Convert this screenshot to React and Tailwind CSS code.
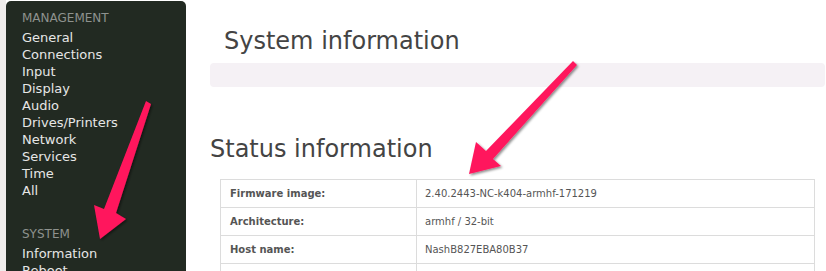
const menu = ['General', 'Connections', 'Input', 'Display', 'Audio', 'Drives/Printers', 'Network', 'Services', 'Time', 'All'];
const systemMenu = ['Information', 'Reboot'];

const rows = [
  ['Firmware image:', '2.40.2443-NC-k404-armhf-171219'],
  ['Architecture:', 'armhf / 32-bit'],
  ['Host name:', 'NashB827EBA80B37'],
  ['', ''],
];

function Arrows() {
  return (
    <svg className="absolute inset-0 pointer-events-none" width="826" height="271" viewBox="0 0 826 271">
      <defs>
        <filter id="sh" x="-20%" y="-20%" width="140%" height="140%">
          <feDropShadow dx="1.5" dy="1.5" stdDeviation="1.2" floodColor="#000" floodOpacity="0.45" />
        </filter>
      </defs>
      <polygon points="146,101 151,104 116,213 126,219 100,239 94,205 104,209" fill="#ff165d" filter="url(#sh)" />
      <polygon points="573,61 577,65 493,159 501,166 469,174 476,142 486,151" fill="#ff165d" filter="url(#sh)" />
    </svg>
  );
}

export default function App() {
  return (
    <div className="relative w-[826px] h-[271px] overflow-hidden bg-white flex" style={{ fontFamily: '"DejaVu Sans", sans-serif' }}>
      <div className="w-[6px] shrink-0 bg-[#efedec]" />

      {/* sidebar */}
      <div className="w-[180px] shrink-0 mt-[1px] rounded-t-[5px] bg-[#222a22] pl-[16px] pt-[9px]">
        <div className="text-[12px] leading-[16px] text-[#8e928e]">MANAGEMENT</div>
        <div className="mt-[3px]">
          {menu.map(m => (
            <div key={m} className="text-[13px] leading-[17px] text-[#e6e6e6]">{m}</div>
          ))}
        </div>
        <div className="mt-[27px] text-[12px] leading-[16px] text-[#8e928e]">SYSTEM</div>
        <div className="mt-[3px]">
          {systemMenu.map(m => (
            <div key={m} className="text-[13px] leading-[17px] text-[#e6e6e6]">{m}</div>
          ))}
        </div>
      </div>

      {/* main */}
      <div className="ml-[24px] w-[615px] shrink-0 pt-[27px]">
        <h1 className="pl-[14px] text-[24px] leading-[28px] text-[#444]">System information</h1>
        <div className="mt-[8px] h-[24px] rounded-[4px] bg-[#f5f1f5]" />
        <h2 className="mt-[48px] text-[24px] leading-[28px] text-[#444]">Status information</h2>
        <table className="mt-[16px] ml-[10px] w-[595px] border-collapse text-[10px] text-[#555]">
          <tbody>
            {rows.map(([k, v], i) => (
              <tr key={i} className="h-[28px]">
                <td className="w-[196px] border border-[#dcdcdc] pl-[9px] font-bold">{k}</td>
                <td className="border border-[#dcdcdc] pl-[8px]">{v}</td>
              </tr>
            ))}
          </tbody>
        </table>
      </div>

      <Arrows />
    </div>
  );
}
